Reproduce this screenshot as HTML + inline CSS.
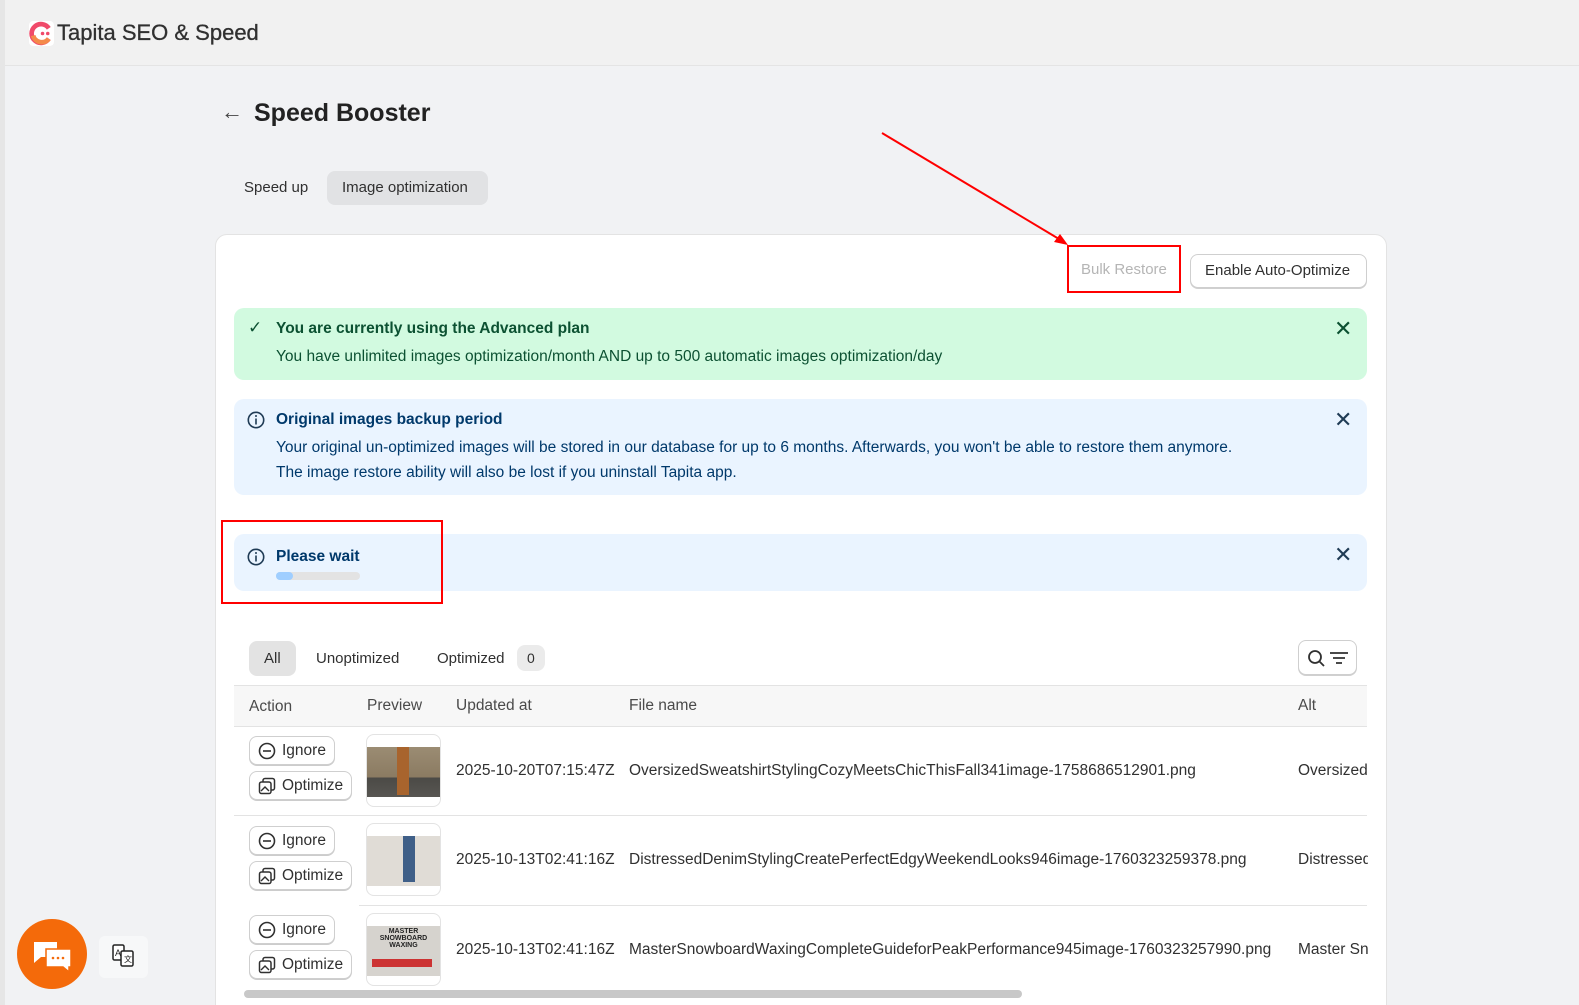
<!DOCTYPE html>
<html style="width:1579px;height:1005px;overflow:hidden"><head><meta charset="utf-8"><style>
*{box-sizing:border-box;margin:0;padding:0}
body{width:1579px;height:1005px;overflow:hidden;background:#f1f2f4;font-family:"Liberation Sans",sans-serif;color:#303030;position:relative}
.a{position:absolute}
.hdr{left:0;top:0;width:1579px;height:66px;background:#f1f1f1;border-bottom:1px solid #e4e4e4}
.strip{left:0;top:0;width:5px;height:1005px;background:#e6e6e6}
.card{left:215px;top:234px;width:1172px;height:790px;background:#fff;border:1px solid #e3e3e3;border-radius:12px}
.banner{border-radius:10px;font-size:15.5px;}
.x{font-size:22px;color:#1f3b55}
.btn{border:1px solid #cfcfcf;border-radius:8px;background:#fff;font-size:15px;color:#303030;box-shadow:0 1px 0 #d0d0d0}
.rb{border:2px solid #f00}
.ab{border:1px solid #cfcfcf;border-radius:8px;background:#fff;font-size:15.5px;height:29px;display:flex;align-items:center;padding:0 8px;box-shadow:0 1px 0 #ccc}
.ab svg{margin-right:6px}
.row{font-size:15.5px;color:#303030}
.thumb{width:75px;height:73px;border:1px solid #e3e3e3;border-radius:8px;background:#fff;overflow:hidden}
</style></head><body>
<div class="a hdr"></div>
<div class="a strip"></div>
<svg class="a" style="left:29px;top:21px" width="25" height="25" viewBox="0 0 24 24"><rect width="24" height="24" rx="4" fill="#fff"/><path d="M19 7A9 9 0 1 0 19 17" stroke="#f04a6a" stroke-width="4.5" fill="none"/><path d="M4 14A8.5 8.5 0 0 0 19 17" stroke="#f48a4a" stroke-width="4.5" fill="none"/><circle cx="13" cy="12" r="1.7" fill="#f04a6a"/><circle cx="18" cy="12" r="1.7" fill="#f04a6a"/></svg>
<div class="a" style="left:57px;top:20px;font-size:22px;color:#303030;-webkit-text-stroke:0.3px #303030">Tapita SEO &amp; Speed</div>
<div class="a" style="left:221px;top:99px;font-size:22px;color:#444">←</div>
<div class="a" style="left:254px;top:99px;font-size:25px;font-weight:bold;color:#222">Speed Booster</div>
<div class="a" style="left:244px;top:179px;font-size:15px">Speed up</div>
<div class="a" style="left:327px;top:171px;width:161px;height:34px;background:#e1e2e4;border-radius:8px;font-size:15px;padding:8px 0 0 15px">Image optimization</div>
<div class="a card"></div>
<svg class="a" style="left:0;top:0" width="1579" height="1005"><line x1="882" y1="133" x2="1064" y2="242" stroke="#f00" stroke-width="2"/><path d="M1068 245L1054 242L1060 234Z" fill="#f00"/></svg>
<div class="a" style="left:1081px;top:261px;font-size:15px;color:#b5b5b5">Bulk Restore</div>
<div class="a rb" style="left:1067px;top:245px;width:114px;height:48px"></div>
<div class="a btn" style="left:1190px;top:254px;width:177px;height:34px;padding:7px 0 0 14px">Enable Auto-Optimize</div>
<div class="a banner" style="left:234px;top:308px;width:1133px;height:72px;background:#d2fae0;color:#0c5132">
<div class="a" style="left:14px;top:10px;font-size:17px">✓</div>
<div class="a" style="left:42px;top:12px;font-weight:bold">You are currently using the Advanced plan</div>
<div class="a" style="left:42px;top:40px">You have unlimited images optimization/month AND up to 500 automatic images optimization/day</div>
<div class="a x" style="left:1100px;top:8px;color:#0c5132">✕</div></div>
<div class="a banner" style="left:234px;top:399px;width:1133px;height:96px;background:#eaf4ff;color:#00396b">
<svg class="a" style="left:13px;top:12px" width="18" height="18" viewBox="0 0 18 18"><circle cx="9" cy="9" r="7.7" stroke="#1f3b55" stroke-width="1.6" fill="none"/><rect x="8.2" y="7.5" width="1.6" height="6" fill="#1f3b55"/><circle cx="9" cy="5" r="1" fill="#1f3b55"/></svg>
<div class="a" style="left:42px;top:12px;font-weight:bold">Original images backup period</div>
<div class="a" style="left:42px;top:40px">Your original un-optimized images will be stored in our database for up to 6 months. Afterwards, you won't be able to restore them anymore.</div>
<div class="a" style="left:42px;top:65px">The image restore ability will also be lost if you uninstall Tapita app.</div>
<div class="a x" style="left:1100px;top:8px">✕</div></div>
<div class="a banner" style="left:234px;top:534px;width:1133px;height:57px;background:#eaf4ff;color:#00396b">
<svg class="a" style="left:13px;top:14px" width="18" height="18" viewBox="0 0 18 18"><circle cx="9" cy="9" r="7.7" stroke="#1f3b55" stroke-width="1.6" fill="none"/><rect x="8.2" y="7.5" width="1.6" height="6" fill="#1f3b55"/><circle cx="9" cy="5" r="1" fill="#1f3b55"/></svg>
<div class="a" style="left:42px;top:14px;font-weight:bold">Please wait</div>
<div class="a" style="left:42px;top:38px;width:84px;height:8px;border-radius:4px;background:#e3e3e3"><div style="width:17px;height:8px;border-radius:4px;background:#9fceff"></div></div>
<div class="a x" style="left:1100px;top:8px">✕</div></div>
<div class="a rb" style="left:221px;top:520px;width:222px;height:84px"></div>
<div class="a" style="left:249px;top:641px;width:47px;height:35px;background:#e3e3e3;border-radius:8px;font-size:15px;padding:9px 0 0 15px">All</div>
<div class="a" style="left:316px;top:650px;font-size:15px">Unoptimized</div>
<div class="a" style="left:437px;top:650px;font-size:15px">Optimized</div>
<div class="a" style="left:517px;top:645px;width:28px;height:26px;background:#ebebeb;border-radius:8px;font-size:14px;padding:5px 0 0 10px">0</div>
<div class="a btn" style="left:1298px;top:640px;width:59px;height:35px"><svg class="a" style="left:8px;top:8px" width="42" height="18" viewBox="0 0 42 18"><circle cx="8" cy="8" r="6" stroke="#303030" stroke-width="1.8" fill="none"/><path d="M12.5 12.5L17 17" stroke="#303030" stroke-width="1.8"/><path d="M23 4H41M26 9H38M29 14H35" stroke="#303030" stroke-width="1.8"/></svg></div>
<div class="a" style="left:234px;top:685px;width:1133px;height:42px;background:#f7f7f7;border-top:1px solid #e3e3e3;border-bottom:1px solid #e3e3e3"></div>
<div class="a" style="left:234px;top:727px;width:125px;height:270px;background:#fff"></div>
<div class="a row" style="left:249px;top:698px;color:#4a4a4a">Action</div>
<div class="a row" style="left:367px;top:697px;color:#4a4a4a">Preview</div>
<div class="a row" style="left:456px;top:697px;color:#4a4a4a">Updated at</div>
<div class="a row" style="left:629px;top:697px;color:#4a4a4a">File name</div>
<div class="a row" style="left:1298px;top:697px;color:#4a4a4a">Alt</div>
<div class="a" style="left:234px;top:815px;width:1133px;height:1px;background:#e3e3e3"></div>
<div class="a" style="left:359px;top:905px;width:1008px;height:1px;background:#e3e3e3"></div>
<div class="a ab" style="left:249px;top:736px"><svg width="18" height="18" viewBox="0 0 18 18"><circle cx="9" cy="9" r="7.5" stroke="#303030" stroke-width="1.6" fill="none"/><path d="M5 9H13" stroke="#303030" stroke-width="1.6"/></svg>Ignore</div>
<div class="a ab" style="left:249px;top:771px"><svg width="18" height="18" viewBox="0 0 18 18"><rect x="5" y="1.5" width="11.5" height="11.5" rx="2" stroke="#303030" stroke-width="1.5" fill="none"/><rect x="1.5" y="5" width="11.5" height="11.5" rx="2" stroke="#303030" stroke-width="1.5" fill="#fff"/><path d="M3 14L7 10L11 14" stroke="#303030" stroke-width="1.4" fill="none"/></svg>Optimize</div>
<div class="a thumb" style="left:366px;top:734px"><div style="margin-top:12px;height:50px;background:linear-gradient(180deg,#9b8c73 0,#8b7b62 60%,#4b4a46 62%,#585652 100%)"><div style="margin-left:30px;width:12px;height:48px;background:#a8642d"></div></div></div>
<div class="a row" style="left:456px;top:762px">2025-10-20T07:15:47Z</div>
<div class="a row" style="left:629px;top:762px">OversizedSweatshirtStylingCozyMeetsChicThisFall341image-1758686512901.png</div>
<div class="a row" style="left:1298px;top:762px">Oversized</div>
<div class="a ab" style="left:249px;top:826px"><svg width="18" height="18" viewBox="0 0 18 18"><circle cx="9" cy="9" r="7.5" stroke="#303030" stroke-width="1.6" fill="none"/><path d="M5 9H13" stroke="#303030" stroke-width="1.6"/></svg>Ignore</div>
<div class="a ab" style="left:249px;top:861px"><svg width="18" height="18" viewBox="0 0 18 18"><rect x="5" y="1.5" width="11.5" height="11.5" rx="2" stroke="#303030" stroke-width="1.5" fill="none"/><rect x="1.5" y="5" width="11.5" height="11.5" rx="2" stroke="#303030" stroke-width="1.5" fill="#fff"/><path d="M3 14L7 10L11 14" stroke="#303030" stroke-width="1.4" fill="none"/></svg>Optimize</div>
<div class="a thumb" style="left:366px;top:823px"><div style="margin-top:12px;height:50px;background:#e0dcd6"><div style="margin-left:36px;width:12px;height:46px;background:#3f5f88"></div></div></div>
<div class="a row" style="left:456px;top:851px">2025-10-13T02:41:16Z</div>
<div class="a row" style="left:629px;top:851px">DistressedDenimStylingCreatePerfectEdgyWeekendLooks946image-1760323259378.png</div>
<div class="a row" style="left:1298px;top:851px;width:70px;overflow:hidden;white-space:nowrap">Distressed</div>
<div class="a ab" style="left:249px;top:915px"><svg width="18" height="18" viewBox="0 0 18 18"><circle cx="9" cy="9" r="7.5" stroke="#303030" stroke-width="1.6" fill="none"/><path d="M5 9H13" stroke="#303030" stroke-width="1.6"/></svg>Ignore</div>
<div class="a ab" style="left:249px;top:950px"><svg width="18" height="18" viewBox="0 0 18 18"><rect x="5" y="1.5" width="11.5" height="11.5" rx="2" stroke="#303030" stroke-width="1.5" fill="none"/><rect x="1.5" y="5" width="11.5" height="11.5" rx="2" stroke="#303030" stroke-width="1.5" fill="#fff"/><path d="M3 14L7 10L11 14" stroke="#303030" stroke-width="1.4" fill="none"/></svg>Optimize</div>
<div class="a thumb" style="left:366px;top:913px"><div style="margin-top:12px;height:50px;background:#d6d3ce;font-size:7px;font-weight:bold;text-align:center;line-height:7px;padding-top:2px;color:#222">MASTER<br>SNOWBOARD<br>WAXING<div style="margin:10px 0 0 5px;width:60px;height:8px;background:#c33"></div></div></div>
<div class="a row" style="left:456px;top:941px">2025-10-13T02:41:16Z</div>
<div class="a row" style="left:629px;top:941px">MasterSnowboardWaxingCompleteGuideforPeakPerformance945image-1760323257990.png</div>
<div class="a row" style="left:1298px;top:941px;width:70px;overflow:hidden;white-space:nowrap">Master Sn</div>
<div class="a" style="left:244px;top:990px;width:778px;height:8px;border-radius:4px;background:#c8c8c8"></div>
<div class="a" style="left:17px;top:919px;width:70px;height:70px;border-radius:50%;background:#f46a0a"></div>
<svg class="a" style="left:33px;top:940px" width="40" height="34" viewBox="0 0 40 34"><path d="M1 2H24V17H8L1 23Z" fill="#fff"/><path d="M13 9H38V27H36V32L30 27H13Z" fill="#fff" stroke="#f46a0a" stroke-width="1.5"/><circle cx="20" cy="18" r="1.3" fill="#f46a0a"/><circle cx="25" cy="18" r="1.3" fill="#f46a0a"/><circle cx="30" cy="18" r="1.3" fill="#f46a0a"/></svg>
<div class="a" style="left:99px;top:936px;width:49px;height:42px;border-radius:6px;background:#f7f8f9"></div>
<svg class="a" style="left:112px;top:944px" width="22" height="24" viewBox="0 0 22 24"><rect x="1" y="1" width="11" height="15" rx="1.5" stroke="#222" stroke-width="1.5" fill="#fff"/><rect x="9" y="7" width="12" height="15" rx="1.5" stroke="#222" stroke-width="1.5" fill="#fff"/><text x="3" y="12" font-size="9" font-family="Liberation Sans" fill="#222">A</text><text x="12" y="18" font-size="8" font-family="Liberation Sans" fill="#222">文</text></svg>
</body></html>
